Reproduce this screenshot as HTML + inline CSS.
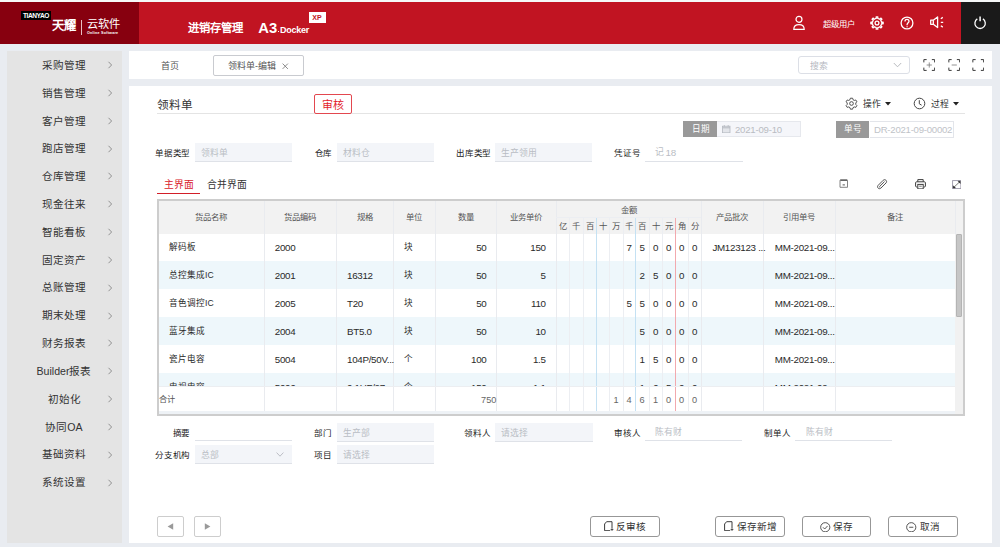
<!DOCTYPE html>
<html lang="zh-CN"><head><meta charset="utf-8"><title>领料单</title>
<style>
html,body{margin:0;padding:0;}
body{width:1000px;height:547px;overflow:hidden;position:relative;background:#e9ecf1;font-family:"Liberation Sans",sans-serif;}
.a{position:absolute;}
.t{position:absolute;white-space:nowrap;line-height:1;}
</style></head><body>
<div class="a" style="left:0.00px;top:0.00px;width:1000.00px;height:2.00px;background:#f6f8f8"></div>
<div class="a" style="left:0.00px;top:2.00px;width:139.00px;height:41.50px;background:#87000f"></div>
<div class="a" style="left:139.00px;top:2.00px;width:822.00px;height:41.50px;background:#c11422"></div>
<div class="a" style="left:961.00px;top:2.00px;width:39.00px;height:41.50px;background:#1a1a1a"></div>
<div class="a" style="left:21.00px;top:11.00px;width:30.00px;height:9.00px;background:#000"></div>
<div class="t" style="left:23.00px;top:11.70px;font-size:6.6px;color:#fff;font-weight:bold;letter-spacing:-0.45px;line-height:8px">TIANYAO</div>
<div class="t" style="left:52.00px;top:20.30px;font-size:12.3px;color:#fff;font-weight:bold;">天耀</div>
<div class="a" style="left:80.50px;top:20.00px;width:1.00px;height:15.00px;background:#e8c0c4"></div>
<div class="t" style="left:86.80px;top:19.40px;font-size:11.2px;color:#fff;">云软件</div>
<div class="t" style="left:87.00px;top:30.80px;font-size:3.7px;color:#fff;font-weight:bold;line-height:4px;letter-spacing:0.22px">Online Software</div>
<div class="t" style="left:187.50px;top:22.60px;font-size:11.3px;color:#fff;font-weight:bold;">进销存管理</div>
<div class="t" style="left:258.30px;top:21.00px;font-size:14.8px;color:#fff;font-weight:bold;line-height:15px">A3</div>
<div class="a" style="left:277.90px;top:30.80px;width:1.60px;height:1.60px;background:#fff"></div>
<div class="t" style="left:280.00px;top:26.00px;font-size:9px;color:#fff;font-weight:bold;line-height:9px;letter-spacing:-0.25px">Docker</div>
<div class="a" style="left:309.00px;top:12.40px;width:17.00px;height:10.60px;background:#fff"></div>
<div class="t" style="left:312.30px;top:14.20px;font-size:7px;color:#c11422;font-weight:bold;line-height:7px">XP</div>
<svg class="a" style="left:791px;top:14px" width="16" height="17" viewBox="0 0 16 17" fill="none" stroke="#fff" stroke-width="1.2">
<circle cx="8" cy="5.3" r="3"/><path d="M2.8 15.3 C2.8 12.2 5 10.6 8 10.6 C11 10.6 13.2 12.2 13.2 15.3 Z"/></svg>
<div class="t" style="left:823.30px;top:20.30px;font-size:8.3px;color:#fff;">超级用户</div>
<svg class="a" style="left:869px;top:14.5px" width="16" height="16" viewBox="0 0 16 16" fill="none" stroke="#fff" stroke-width="1.3" stroke-linejoin="round">
<path d="M12.26 6.27 L12.54 7.24 L14.15 7.18 L14.15 8.82 L12.54 8.76 L12.24 9.79 L11.74 10.67 L12.92 11.77 L11.77 12.92 L10.67 11.74 L9.73 12.26 L8.76 12.54 L8.82 14.15 L7.18 14.15 L7.24 12.54 L6.21 12.24 L5.33 11.74 L4.23 12.92 L3.08 11.77 L4.26 10.67 L3.74 9.73 L3.46 8.76 L1.85 8.82 L1.85 7.18 L3.46 7.24 L3.76 6.21 L4.26 5.33 L3.08 4.23 L4.23 3.08 L5.33 4.26 L6.27 3.74 L7.24 3.46 L7.18 1.85 L8.82 1.85 L8.76 3.46 L9.79 3.76 L10.67 4.26 L11.77 3.08 L12.92 4.23 L11.74 5.33 Z"/><circle cx="8" cy="8" r="1.9"/></svg>
<svg class="a" style="left:899px;top:14.5px" width="16" height="16" viewBox="0 0 16 16" fill="none" stroke="#fff" stroke-width="1.3">
<circle cx="8" cy="8" r="5.9"/><path d="M6 6.4 C6 5 6.9 4.3 8 4.3 C9.1 4.3 10 5 10 6.2 C10 7.6 8.1 7.8 8.1 9.6 V10.2"/><path d="M8.1 11.2 V12.3" stroke-width="1.2"/></svg>
<svg class="a" style="left:929px;top:15px" width="16" height="15" viewBox="0 0 16 15" fill="none" stroke="#fff" stroke-width="1.3" stroke-linejoin="round">
<path d="M1.7 5.2 H4.3 L8.6 1.9 V12.6 L4.3 9.3 H1.7 Z"/><path d="M4.3 5.2 V9.3"/><path d="M11.8 3.7 L13.8 2.4 M11.8 7.3 H14.2 M11.8 10.8 L13.8 12.1"/></svg>
<svg class="a" style="left:972px;top:15px" width="16" height="16" viewBox="0 0 16 16" fill="none" stroke="#fff" stroke-width="1.3">
<path d="M5.3 3.9 A5.2 5.2 0 1 0 10.9 3.9"/><path d="M8.1 1.4 V6.3" stroke-width="1.5"/></svg>
<div class="a" style="left:7.00px;top:51.00px;width:114.50px;height:492.00px;background:#e4e4e4"></div>
<div class="t" style="left:7px;width:114px;text-align:center;top:59.90px;font-size:10.6px;color:#333">采购管理</div>
<svg class="a" style="left:107px;top:61.20px" width="6" height="8" viewBox="0 0 6 8" fill="none" stroke="#888" stroke-width="0.9"><path d="M1.5 0.8 L4.6 4 L1.5 7.2"/></svg>
<div class="t" style="left:7px;width:114px;text-align:center;top:87.72px;font-size:10.6px;color:#333">销售管理</div>
<svg class="a" style="left:107px;top:89.02px" width="6" height="8" viewBox="0 0 6 8" fill="none" stroke="#888" stroke-width="0.9"><path d="M1.5 0.8 L4.6 4 L1.5 7.2"/></svg>
<div class="t" style="left:7px;width:114px;text-align:center;top:115.54px;font-size:10.6px;color:#333">客户管理</div>
<svg class="a" style="left:107px;top:116.84px" width="6" height="8" viewBox="0 0 6 8" fill="none" stroke="#888" stroke-width="0.9"><path d="M1.5 0.8 L4.6 4 L1.5 7.2"/></svg>
<div class="t" style="left:7px;width:114px;text-align:center;top:143.36px;font-size:10.6px;color:#333">跑店管理</div>
<svg class="a" style="left:107px;top:144.66px" width="6" height="8" viewBox="0 0 6 8" fill="none" stroke="#888" stroke-width="0.9"><path d="M1.5 0.8 L4.6 4 L1.5 7.2"/></svg>
<div class="t" style="left:7px;width:114px;text-align:center;top:171.18px;font-size:10.6px;color:#333">仓库管理</div>
<svg class="a" style="left:107px;top:172.48px" width="6" height="8" viewBox="0 0 6 8" fill="none" stroke="#888" stroke-width="0.9"><path d="M1.5 0.8 L4.6 4 L1.5 7.2"/></svg>
<div class="t" style="left:7px;width:114px;text-align:center;top:199.00px;font-size:10.6px;color:#333">现金往来</div>
<svg class="a" style="left:107px;top:200.30px" width="6" height="8" viewBox="0 0 6 8" fill="none" stroke="#888" stroke-width="0.9"><path d="M1.5 0.8 L4.6 4 L1.5 7.2"/></svg>
<div class="t" style="left:7px;width:114px;text-align:center;top:226.82px;font-size:10.6px;color:#333">智能看板</div>
<svg class="a" style="left:107px;top:228.12px" width="6" height="8" viewBox="0 0 6 8" fill="none" stroke="#888" stroke-width="0.9"><path d="M1.5 0.8 L4.6 4 L1.5 7.2"/></svg>
<div class="t" style="left:7px;width:114px;text-align:center;top:254.64px;font-size:10.6px;color:#333">固定资产</div>
<svg class="a" style="left:107px;top:255.94px" width="6" height="8" viewBox="0 0 6 8" fill="none" stroke="#888" stroke-width="0.9"><path d="M1.5 0.8 L4.6 4 L1.5 7.2"/></svg>
<div class="t" style="left:7px;width:114px;text-align:center;top:282.46px;font-size:10.6px;color:#333">总账管理</div>
<svg class="a" style="left:107px;top:283.76px" width="6" height="8" viewBox="0 0 6 8" fill="none" stroke="#888" stroke-width="0.9"><path d="M1.5 0.8 L4.6 4 L1.5 7.2"/></svg>
<div class="t" style="left:7px;width:114px;text-align:center;top:310.28px;font-size:10.6px;color:#333">期末处理</div>
<svg class="a" style="left:107px;top:311.58px" width="6" height="8" viewBox="0 0 6 8" fill="none" stroke="#888" stroke-width="0.9"><path d="M1.5 0.8 L4.6 4 L1.5 7.2"/></svg>
<div class="t" style="left:7px;width:114px;text-align:center;top:338.10px;font-size:10.6px;color:#333">财务报表</div>
<svg class="a" style="left:107px;top:339.40px" width="6" height="8" viewBox="0 0 6 8" fill="none" stroke="#888" stroke-width="0.9"><path d="M1.5 0.8 L4.6 4 L1.5 7.2"/></svg>
<div class="t" style="left:7px;width:114px;text-align:center;top:365.92px;font-size:10.6px;color:#333">Builder报表</div>
<svg class="a" style="left:107px;top:367.22px" width="6" height="8" viewBox="0 0 6 8" fill="none" stroke="#888" stroke-width="0.9"><path d="M1.5 0.8 L4.6 4 L1.5 7.2"/></svg>
<div class="t" style="left:7px;width:114px;text-align:center;top:393.74px;font-size:10.6px;color:#333">初始化</div>
<svg class="a" style="left:107px;top:395.04px" width="6" height="8" viewBox="0 0 6 8" fill="none" stroke="#888" stroke-width="0.9"><path d="M1.5 0.8 L4.6 4 L1.5 7.2"/></svg>
<div class="t" style="left:7px;width:114px;text-align:center;top:421.56px;font-size:10.6px;color:#333">协同OA</div>
<svg class="a" style="left:107px;top:422.86px" width="6" height="8" viewBox="0 0 6 8" fill="none" stroke="#888" stroke-width="0.9"><path d="M1.5 0.8 L4.6 4 L1.5 7.2"/></svg>
<div class="t" style="left:7px;width:114px;text-align:center;top:449.38px;font-size:10.6px;color:#333">基础资料</div>
<svg class="a" style="left:107px;top:450.68px" width="6" height="8" viewBox="0 0 6 8" fill="none" stroke="#888" stroke-width="0.9"><path d="M1.5 0.8 L4.6 4 L1.5 7.2"/></svg>
<div class="t" style="left:7px;width:114px;text-align:center;top:477.20px;font-size:10.6px;color:#333">系统设置</div>
<svg class="a" style="left:107px;top:478.50px" width="6" height="8" viewBox="0 0 6 8" fill="none" stroke="#888" stroke-width="0.9"><path d="M1.5 0.8 L4.6 4 L1.5 7.2"/></svg>
<div class="a" style="left:129.00px;top:51.00px;width:863.00px;height:28.00px;background:#fff"></div>
<div class="t" style="left:161.00px;top:62.00px;font-size:9px;color:#555;">首页</div>
<div class="a" style="left:213.40px;top:55.40px;width:90.20px;height:20.20px;border:1px solid #c9cbd0;border-radius:2px;box-sizing:border-box;background:#fff"></div>
<div class="t" style="left:228.00px;top:62.00px;font-size:9px;color:#555;">领料单-编辑</div>
<svg class="a" style="left:282.3px;top:63.2px" width="6.5" height="6.5" viewBox="0 0 6.5 6.5" stroke="#777" stroke-width="0.85"><path d="M0.6 0.6 L5.9 5.9 M5.9 0.6 L0.6 5.9"/></svg>
<div class="a" style="left:798.40px;top:55.50px;width:111.30px;height:18.90px;border:1px solid #dcdfe6;border-radius:3px;box-sizing:border-box;background:#fff"></div>
<div class="t" style="left:810.00px;top:61.50px;font-size:8.8px;color:#b5b8bf;">搜索</div>
<svg class="a" style="left:893px;top:62px" width="9" height="6" viewBox="0 0 9 6" fill="none" stroke="#b0b3b8" stroke-width="0.9"><path d="M0.8 1 L4.5 4.8 L8.2 1"/></svg>
<svg class="a" style="left:922.8px;top:58.6px" width="12.5" height="12" viewBox="0 0 12 12" fill="none" stroke="#3a3a3a" stroke-width="1"><path d="M0.6 3.4 V0.6 H3.4 M8.6 0.6 H11.4 V3.4 M11.4 8.6 V11.4 H8.6 M3.4 11.4 H0.6 V8.6"/><path d="M6 3.4 V8.6 M3.4 6 H8.6" stroke="#777" stroke-width="0.8"/></svg>
<svg class="a" style="left:947.5px;top:58.6px" width="12.5" height="12" viewBox="0 0 12 12" fill="none" stroke="#3a3a3a" stroke-width="1"><path d="M0.6 3.4 V0.6 H3.4 M8.6 0.6 H11.4 V3.4 M11.4 8.6 V11.4 H8.6 M3.4 11.4 H0.6 V8.6"/><path d="M3.4 6 H8.6" stroke="#777" stroke-width="0.8"/></svg>
<svg class="a" style="left:971.7px;top:58.6px" width="12.5" height="12" viewBox="0 0 12 12" fill="none" stroke="#3a3a3a" stroke-width="1"><path d="M0.6 3.4 V0.6 H3.4 M8.6 0.6 H11.4 V3.4 M11.4 8.6 V11.4 H8.6 M3.4 11.4 H0.6 V8.6"/></svg>
<div class="a" style="left:129.00px;top:86.00px;width:863.00px;height:457.40px;background:#fff"></div>
<div class="t" style="left:157.00px;top:98.50px;font-size:11.6px;color:#333;">领料单</div>
<div class="a" style="left:157.00px;top:113.00px;width:808.00px;height:1.00px;background:#e4e4e4"></div>
<div class="a" style="left:313.80px;top:94.20px;width:37.90px;height:19.60px;border:1px solid #e3474f;border-radius:2px;box-sizing:border-box;background:#fff"></div>
<div class="t" style="left:321.50px;top:99.50px;font-size:11px;color:#e3242e;">审核</div>
<svg class="a" style="left:844.5px;top:97px" width="13" height="13" viewBox="0 0 14 14" fill="none" stroke="#444" stroke-width="1">
<path d="M5.8 1.3 h2.4 l0.4 1.6 l1.4 0.8 l1.6 -0.5 l1.2 2 l-1.2 1.2 v1.6 l1.2 1.2 l-1.2 2 l-1.6 -0.5 l-1.4 0.8 l-0.4 1.6 h-2.4 l-0.4 -1.6 l-1.4 -0.8 l-1.6 0.5 l-1.2 -2 l1.2 -1.2 v-1.6 l-1.2 -1.2 l1.2 -2 l1.6 0.5 l1.4 -0.8 z"/><circle cx="7" cy="7" r="2"/></svg>
<div class="t" style="left:862.70px;top:100.00px;font-size:8.8px;color:#333;">操作</div>
<svg class="a" style="left:885px;top:102px" width="6" height="3.5" viewBox="0 0 6 3.5"><path d="M0 0 H6 L3 3.5 Z" fill="#222"/></svg>
<svg class="a" style="left:913px;top:96.8px" width="13" height="13" viewBox="0 0 13 13" fill="none" stroke="#444" stroke-width="1"><circle cx="6.5" cy="6.5" r="5.3"/><path d="M6.3 3.2 V6.8 L8.6 8.2"/></svg>
<div class="t" style="left:930.90px;top:100.00px;font-size:8.8px;color:#333;">过程</div>
<svg class="a" style="left:953.2px;top:102px" width="6" height="3.5" viewBox="0 0 6 3.5"><path d="M0 0 H6 L3 3.5 Z" fill="#222"/></svg>
<div class="a" style="left:683.20px;top:121.20px;width:33.80px;height:16.20px;background:#999"></div>
<div class="t" style="left:692.00px;top:125.00px;font-size:8.6px;color:#fff;font-weight:500">日期</div>
<div class="a" style="left:717.00px;top:121.20px;width:84.00px;height:16.20px;background:#f5f6fa;border:1px solid #e6e8ed;border-left:none;box-sizing:border-box"></div>
<svg class="a" style="left:722px;top:125px" width="8.5" height="8" viewBox="0 0 8.5 8"><rect x="0.5" y="1.2" width="7.5" height="6.6" fill="#e3e5ea" stroke="#b5b9c0" stroke-width="0.8"/><path d="M0.5 2.8 H8" stroke="#b5b9c0" stroke-width="1"/><path d="M2.3 0 V1.8 M6.2 0 V1.8" stroke="#b5b9c0" stroke-width="0.8"/></svg>
<div class="t" style="left:735.00px;top:125.20px;font-size:9.6px;color:#b9bcc2;letter-spacing:-0.22px">2021-09-10</div>
<div class="a" style="left:836.20px;top:121.00px;width:33.30px;height:16.60px;background:#999"></div>
<div class="t" style="left:844.00px;top:125.00px;font-size:8.6px;color:#fff;font-weight:500">单号</div>
<div class="a" style="left:869.50px;top:121.00px;width:84.50px;height:16.60px;background:#fff;border:1px solid #e3e5ea;border-left:none;box-sizing:border-box"></div>
<div class="t" style="left:874.00px;top:125.20px;font-size:9.6px;color:#c0c3c8;letter-spacing:-0.25px">DR-2021-09-00002</div>
<div class="t" style="left:155.40px;top:148.60px;font-size:8.5px;color:#1a1a1a;font-weight:500;letter-spacing:-0.3px">单据类型</div>
<div class="a" style="left:195.00px;top:142.60px;width:97.30px;height:19.00px;background:#f3f5f9;border-bottom:1px solid #dfe2e8;box-sizing:border-box"></div>
<div class="t" style="left:201.00px;top:148.50px;font-size:8.8px;color:#b9bdc4;">领料单</div>
<div class="t" style="left:314.50px;top:148.60px;font-size:8.5px;color:#1a1a1a;font-weight:500;letter-spacing:-0.3px">仓库</div>
<div class="a" style="left:337.00px;top:142.60px;width:96.80px;height:19.00px;background:#f3f5f9;border-bottom:1px solid #dfe2e8;box-sizing:border-box"></div>
<div class="t" style="left:343.00px;top:148.50px;font-size:8.8px;color:#b9bdc4;">材料仓</div>
<div class="t" style="left:456.20px;top:148.60px;font-size:8.5px;color:#1a1a1a;font-weight:500;letter-spacing:-0.3px">出库类型</div>
<div class="a" style="left:495.00px;top:142.60px;width:97.20px;height:19.00px;background:#f3f5f9;border-bottom:1px solid #dfe2e8;box-sizing:border-box"></div>
<div class="t" style="left:501.00px;top:148.50px;font-size:8.8px;color:#b9bdc4;">生产领用</div>
<div class="t" style="left:614.20px;top:148.70px;font-size:8.5px;color:#1a1a1a;font-weight:500;letter-spacing:-0.3px">凭证号</div>
<div class="a" style="left:645.00px;top:142.60px;width:97.60px;height:19.20px;border-bottom:1px solid #dfe2e8;box-sizing:border-box"></div>
<div class="t" style="left:655.30px;top:148.20px;font-size:8.8px;color:#b9bdc4;">记</div>
<div class="t" style="left:665.50px;top:148.00px;font-size:9.8px;color:#b9bdc4;letter-spacing:-0.2px">18</div>
<div class="t" style="left:163.90px;top:179.60px;font-size:9.8px;color:#d9222c;">主界面</div>
<div class="a" style="left:157.00px;top:192.50px;width:42.90px;height:1.70px;background:#d21e28"></div>
<div class="t" style="left:207.40px;top:179.60px;font-size:9.8px;color:#333;">合并界面</div>
<svg class="a" style="left:838.5px;top:179.2px" width="9.5" height="9.5" viewBox="0 0 9.5 9.5" fill="none"><path d="M1.2 1.1 H8.3" stroke="#333" stroke-width="1.3"/><path d="M1 1.2 V8.3 H8.5 V1.2" stroke="#777" stroke-width="0.9"/><path d="M3.6 5.9 H5.9" stroke="#555" stroke-width="1"/></svg>
<svg class="a" style="left:876.6px;top:178.5px" width="11" height="11" viewBox="0 0 11 11" fill="none" stroke="#4a4a4a" stroke-width="0.95"><path d="M8.9 1.2 C9.8 2 9.8 3.2 9 4 L4 9 C3.1 9.9 1.9 9.9 1.1 9.1 C0.3 8.3 0.4 7.1 1.2 6.3 L6.2 1.3 C7 0.5 8.1 0.4 8.9 1.2 Z"/><path d="M7.5 2.6 L2.7 7.4 C2.4 7.7 2.4 8.1 2.7 8.4"/></svg>
<svg class="a" style="left:915.4px;top:178.6px" width="11" height="10.5" viewBox="0 0 11 10.5" fill="none" stroke="#3d3d3d" stroke-width="1"><path d="M2.8 2.8 V0.6 H8.2 V2.8"/><path d="M2.4 8 H1.6 C1 8 0.6 7.6 0.6 7 V3.8 C0.6 3.2 1 2.8 1.6 2.8 H9.4 C10 2.8 10.4 3.2 10.4 3.8 V7 C10.4 7.6 10 8 9.4 8 H8.6"/><rect x="2.8" y="5.4" width="5.4" height="4.5"/><path d="M4.2 7.2 H6.8" stroke-width="0.7"/></svg>
<svg class="a" style="left:951.6px;top:179.8px" width="9.5" height="9.2" viewBox="0 0 9.5 9.2" fill="none"><rect x="0.6" y="0.6" width="8.3" height="8" stroke="#9a96a8" stroke-width="0.9"/><path d="M1.6 7.6 L7.9 1.6" stroke="#555" stroke-width="0.8"/><path d="M6 1.2 H8.3 V3.5 Z M1.2 5.7 V8 H3.5 Z" fill="#222" stroke="#222" stroke-width="0.4"/></svg>
<div class="a" style="left:157.00px;top:199.00px;width:808.00px;height:217.00px;border:2px solid #cdcdcd;box-sizing:border-box;background:#fff"></div>
<div class="a" style="left:159.00px;top:201.00px;width:804.00px;height:32.60px;background:#f2f2f2"></div>
<div class="a" style="left:158.5px;top:233.6px;width:796.50px;height:152.15px;overflow:hidden">
<div class="a" style="left:0;top:0.00px;width:100%;height:27.9px;background:#fff"></div>
<div class="a" style="left:0;top:27.90px;width:100%;height:27.9px;background:#eef7fb"></div>
<div class="a" style="left:0;top:55.80px;width:100%;height:27.9px;background:#fff"></div>
<div class="a" style="left:0;top:83.70px;width:100%;height:27.9px;background:#eef7fb"></div>
<div class="a" style="left:0;top:111.60px;width:100%;height:27.9px;background:#fff"></div>
<div class="a" style="left:0;top:139.50px;width:100%;height:27.9px;background:#eef7fb"></div>
</div>
<div class="a" style="left:264.00px;top:201.00px;width:1.00px;height:212.75px;background:#e9ebef"></div>
<div class="a" style="left:336.00px;top:201.00px;width:1.00px;height:212.75px;background:#e9ebef"></div>
<div class="a" style="left:393.00px;top:201.00px;width:1.00px;height:212.75px;background:#e9ebef"></div>
<div class="a" style="left:435.00px;top:201.00px;width:1.00px;height:212.75px;background:#e9ebef"></div>
<div class="a" style="left:496.00px;top:201.00px;width:1.00px;height:212.75px;background:#e9ebef"></div>
<div class="a" style="left:556.00px;top:201.00px;width:1.00px;height:212.75px;background:#e9ebef"></div>
<div class="a" style="left:701.00px;top:201.00px;width:1.00px;height:212.75px;background:#e9ebef"></div>
<div class="a" style="left:763.00px;top:201.00px;width:1.00px;height:212.75px;background:#e9ebef"></div>
<div class="a" style="left:835.00px;top:201.00px;width:1.00px;height:212.75px;background:#e9ebef"></div>
<div class="a" style="left:955.00px;top:201.00px;width:1.00px;height:212.75px;background:#e9ebef"></div>
<div class="a" style="left:569.00px;top:216.90px;width:1.00px;height:196.85px;background:#eceef2"></div>
<div class="a" style="left:583.00px;top:216.90px;width:1.00px;height:196.85px;background:#eceef2"></div>
<div class="a" style="left:596.00px;top:216.90px;width:1.00px;height:196.85px;background:#c4e1f3"></div>
<div class="a" style="left:609.00px;top:216.90px;width:1.00px;height:196.85px;background:#eceef2"></div>
<div class="a" style="left:623.00px;top:216.90px;width:1.00px;height:196.85px;background:#eceef2"></div>
<div class="a" style="left:635.00px;top:216.90px;width:1.00px;height:196.85px;background:#c4e1f3"></div>
<div class="a" style="left:649.00px;top:216.90px;width:1.00px;height:196.85px;background:#eceef2"></div>
<div class="a" style="left:662.00px;top:216.90px;width:1.00px;height:196.85px;background:#eceef2"></div>
<div class="a" style="left:675.00px;top:216.90px;width:1.00px;height:196.85px;background:#f2a9ae"></div>
<div class="a" style="left:688.00px;top:216.90px;width:1.00px;height:196.85px;background:#eceef2"></div>
<div class="a" style="left:556.00px;top:217.00px;width:145.00px;height:1.00px;background:#eceef2"></div>
<div class="t" style="left:157.50px;width:106.50px;text-align:center;top:213.00px;font-size:8.4px;color:#555;">货品名称</div>
<div class="t" style="left:264.00px;width:72.00px;text-align:center;top:213.00px;font-size:8.4px;color:#555;">货品编码</div>
<div class="t" style="left:336.00px;width:57.00px;text-align:center;top:213.00px;font-size:8.4px;color:#555;">规格</div>
<div class="t" style="left:393.00px;width:42.00px;text-align:center;top:213.00px;font-size:8.4px;color:#555;">单位</div>
<div class="t" style="left:435.00px;width:61.00px;text-align:center;top:213.00px;font-size:8.4px;color:#555;">数量</div>
<div class="t" style="left:496.00px;width:60.00px;text-align:center;top:213.00px;font-size:8.4px;color:#555;">业务单价</div>
<div class="t" style="left:556.00px;width:145.00px;text-align:center;top:205.80px;font-size:8.4px;color:#555;">金额</div>
<div class="t" style="left:556.00px;width:13.00px;text-align:center;top:221.80px;font-size:8.4px;color:#555;">亿</div>
<div class="t" style="left:569.00px;width:14.00px;text-align:center;top:221.80px;font-size:8.4px;color:#555;">千</div>
<div class="t" style="left:583.00px;width:13.00px;text-align:center;top:221.80px;font-size:8.4px;color:#555;">百</div>
<div class="t" style="left:596.00px;width:13.00px;text-align:center;top:221.80px;font-size:8.4px;color:#555;">十</div>
<div class="t" style="left:609.00px;width:14.00px;text-align:center;top:221.80px;font-size:8.4px;color:#555;">万</div>
<div class="t" style="left:623.00px;width:12.00px;text-align:center;top:221.80px;font-size:8.4px;color:#555;">千</div>
<div class="t" style="left:635.00px;width:14.00px;text-align:center;top:221.80px;font-size:8.4px;color:#555;">百</div>
<div class="t" style="left:649.00px;width:13.00px;text-align:center;top:221.80px;font-size:8.4px;color:#555;">十</div>
<div class="t" style="left:662.00px;width:13.00px;text-align:center;top:221.80px;font-size:8.4px;color:#555;">元</div>
<div class="t" style="left:675.00px;width:13.00px;text-align:center;top:221.80px;font-size:8.4px;color:#555;">角</div>
<div class="t" style="left:688.00px;width:13.00px;text-align:center;top:221.80px;font-size:8.4px;color:#555;">分</div>
<div class="t" style="left:701.00px;width:62.00px;text-align:center;top:213.00px;font-size:8.4px;color:#555;">产品批次</div>
<div class="t" style="left:763.00px;width:72.00px;text-align:center;top:213.00px;font-size:8.4px;color:#555;">引用单号</div>
<div class="t" style="left:835.00px;width:120.00px;text-align:center;top:213.00px;font-size:8.4px;color:#555;">备注</div>
<div class="a" style="left:0;top:233.6px;width:1000px;height:152.15px;overflow:hidden">
<div class="t" style="left:169.00px;top:9.90px;font-size:8.6px;color:#2a2a2a;">解码板</div>
<div class="t" style="left:274.80px;top:9.60px;font-size:9.8px;color:#2a2a2a;letter-spacing:-0.3px">2000</div>
<div class="t" style="left:347.00px;top:9.60px;font-size:9.8px;color:#2a2a2a;letter-spacing:-0.3px"></div>
<div class="t" style="left:404.40px;top:9.90px;font-size:8.6px;color:#2a2a2a;">块</div>
<div class="t" style="left:396px;width:90.5px;text-align:right;top:9.60px;font-size:9.8px;color:#2a2a2a;letter-spacing:-0.3px">50</div>
<div class="t" style="left:456px;width:89.7px;text-align:right;top:9.60px;font-size:9.8px;color:#2a2a2a;letter-spacing:-0.3px">150</div>
<div class="t" style="left:688.15px;width:13.00px;text-align:center;top:9.60px;font-size:9.8px;color:#2a2a2a;">0</div>
<div class="t" style="left:675.15px;width:13.00px;text-align:center;top:9.60px;font-size:9.8px;color:#2a2a2a;">0</div>
<div class="t" style="left:662.15px;width:13.00px;text-align:center;top:9.60px;font-size:9.8px;color:#2a2a2a;">0</div>
<div class="t" style="left:649.15px;width:13.00px;text-align:center;top:9.60px;font-size:9.8px;color:#2a2a2a;">0</div>
<div class="t" style="left:635.15px;width:14.00px;text-align:center;top:9.60px;font-size:9.8px;color:#2a2a2a;">5</div>
<div class="t" style="left:623.15px;width:12.00px;text-align:center;top:9.60px;font-size:9.8px;color:#2a2a2a;">7</div>
<div class="t" style="left:712.40px;top:9.60px;font-size:9.8px;color:#2a2a2a;letter-spacing:-0.3px">JM123123 ...</div>
<div class="t" style="left:774.80px;top:9.60px;font-size:9.8px;color:#2a2a2a;letter-spacing:-0.3px">MM-2021-09...</div>
<div class="t" style="left:169.00px;top:37.80px;font-size:8.6px;color:#2a2a2a;">总控集成IC</div>
<div class="t" style="left:274.80px;top:37.50px;font-size:9.8px;color:#2a2a2a;letter-spacing:-0.3px">2001</div>
<div class="t" style="left:347.00px;top:37.50px;font-size:9.8px;color:#2a2a2a;letter-spacing:-0.3px">16312</div>
<div class="t" style="left:404.40px;top:37.80px;font-size:8.6px;color:#2a2a2a;">块</div>
<div class="t" style="left:396px;width:90.5px;text-align:right;top:37.50px;font-size:9.8px;color:#2a2a2a;letter-spacing:-0.3px">50</div>
<div class="t" style="left:456px;width:89.7px;text-align:right;top:37.50px;font-size:9.8px;color:#2a2a2a;letter-spacing:-0.3px">5</div>
<div class="t" style="left:688.15px;width:13.00px;text-align:center;top:37.50px;font-size:9.8px;color:#2a2a2a;">0</div>
<div class="t" style="left:675.15px;width:13.00px;text-align:center;top:37.50px;font-size:9.8px;color:#2a2a2a;">0</div>
<div class="t" style="left:662.15px;width:13.00px;text-align:center;top:37.50px;font-size:9.8px;color:#2a2a2a;">0</div>
<div class="t" style="left:649.15px;width:13.00px;text-align:center;top:37.50px;font-size:9.8px;color:#2a2a2a;">5</div>
<div class="t" style="left:635.15px;width:14.00px;text-align:center;top:37.50px;font-size:9.8px;color:#2a2a2a;">2</div>
<div class="t" style="left:712.40px;top:37.50px;font-size:9.8px;color:#2a2a2a;letter-spacing:-0.3px"></div>
<div class="t" style="left:774.80px;top:37.50px;font-size:9.8px;color:#2a2a2a;letter-spacing:-0.3px">MM-2021-09...</div>
<div class="t" style="left:169.00px;top:65.70px;font-size:8.6px;color:#2a2a2a;">音色调控IC</div>
<div class="t" style="left:274.80px;top:65.40px;font-size:9.8px;color:#2a2a2a;letter-spacing:-0.3px">2005</div>
<div class="t" style="left:347.00px;top:65.40px;font-size:9.8px;color:#2a2a2a;letter-spacing:-0.3px">T20</div>
<div class="t" style="left:404.40px;top:65.70px;font-size:8.6px;color:#2a2a2a;">块</div>
<div class="t" style="left:396px;width:90.5px;text-align:right;top:65.40px;font-size:9.8px;color:#2a2a2a;letter-spacing:-0.3px">50</div>
<div class="t" style="left:456px;width:89.7px;text-align:right;top:65.40px;font-size:9.8px;color:#2a2a2a;letter-spacing:-0.3px">110</div>
<div class="t" style="left:688.15px;width:13.00px;text-align:center;top:65.40px;font-size:9.8px;color:#2a2a2a;">0</div>
<div class="t" style="left:675.15px;width:13.00px;text-align:center;top:65.40px;font-size:9.8px;color:#2a2a2a;">0</div>
<div class="t" style="left:662.15px;width:13.00px;text-align:center;top:65.40px;font-size:9.8px;color:#2a2a2a;">0</div>
<div class="t" style="left:649.15px;width:13.00px;text-align:center;top:65.40px;font-size:9.8px;color:#2a2a2a;">0</div>
<div class="t" style="left:635.15px;width:14.00px;text-align:center;top:65.40px;font-size:9.8px;color:#2a2a2a;">5</div>
<div class="t" style="left:623.15px;width:12.00px;text-align:center;top:65.40px;font-size:9.8px;color:#2a2a2a;">5</div>
<div class="t" style="left:712.40px;top:65.40px;font-size:9.8px;color:#2a2a2a;letter-spacing:-0.3px"></div>
<div class="t" style="left:774.80px;top:65.40px;font-size:9.8px;color:#2a2a2a;letter-spacing:-0.3px">MM-2021-09...</div>
<div class="t" style="left:169.00px;top:93.60px;font-size:8.6px;color:#2a2a2a;">蓝牙集成</div>
<div class="t" style="left:274.80px;top:93.30px;font-size:9.8px;color:#2a2a2a;letter-spacing:-0.3px">2004</div>
<div class="t" style="left:347.00px;top:93.30px;font-size:9.8px;color:#2a2a2a;letter-spacing:-0.3px">BT5.0</div>
<div class="t" style="left:404.40px;top:93.60px;font-size:8.6px;color:#2a2a2a;">块</div>
<div class="t" style="left:396px;width:90.5px;text-align:right;top:93.30px;font-size:9.8px;color:#2a2a2a;letter-spacing:-0.3px">50</div>
<div class="t" style="left:456px;width:89.7px;text-align:right;top:93.30px;font-size:9.8px;color:#2a2a2a;letter-spacing:-0.3px">10</div>
<div class="t" style="left:688.15px;width:13.00px;text-align:center;top:93.30px;font-size:9.8px;color:#2a2a2a;">0</div>
<div class="t" style="left:675.15px;width:13.00px;text-align:center;top:93.30px;font-size:9.8px;color:#2a2a2a;">0</div>
<div class="t" style="left:662.15px;width:13.00px;text-align:center;top:93.30px;font-size:9.8px;color:#2a2a2a;">0</div>
<div class="t" style="left:649.15px;width:13.00px;text-align:center;top:93.30px;font-size:9.8px;color:#2a2a2a;">0</div>
<div class="t" style="left:635.15px;width:14.00px;text-align:center;top:93.30px;font-size:9.8px;color:#2a2a2a;">5</div>
<div class="t" style="left:712.40px;top:93.30px;font-size:9.8px;color:#2a2a2a;letter-spacing:-0.3px"></div>
<div class="t" style="left:774.80px;top:93.30px;font-size:9.8px;color:#2a2a2a;letter-spacing:-0.3px">MM-2021-09...</div>
<div class="t" style="left:169.00px;top:121.50px;font-size:8.6px;color:#2a2a2a;">瓷片电容</div>
<div class="t" style="left:274.80px;top:121.20px;font-size:9.8px;color:#2a2a2a;letter-spacing:-0.3px">5004</div>
<div class="t" style="left:347.00px;top:121.20px;font-size:9.8px;color:#2a2a2a;letter-spacing:-0.3px">104P/50V...</div>
<div class="t" style="left:404.40px;top:121.50px;font-size:8.6px;color:#2a2a2a;">个</div>
<div class="t" style="left:396px;width:90.5px;text-align:right;top:121.20px;font-size:9.8px;color:#2a2a2a;letter-spacing:-0.3px">100</div>
<div class="t" style="left:456px;width:89.7px;text-align:right;top:121.20px;font-size:9.8px;color:#2a2a2a;letter-spacing:-0.3px">1.5</div>
<div class="t" style="left:688.15px;width:13.00px;text-align:center;top:121.20px;font-size:9.8px;color:#2a2a2a;">0</div>
<div class="t" style="left:675.15px;width:13.00px;text-align:center;top:121.20px;font-size:9.8px;color:#2a2a2a;">0</div>
<div class="t" style="left:662.15px;width:13.00px;text-align:center;top:121.20px;font-size:9.8px;color:#2a2a2a;">0</div>
<div class="t" style="left:649.15px;width:13.00px;text-align:center;top:121.20px;font-size:9.8px;color:#2a2a2a;">5</div>
<div class="t" style="left:635.15px;width:14.00px;text-align:center;top:121.20px;font-size:9.8px;color:#2a2a2a;">1</div>
<div class="t" style="left:712.40px;top:121.20px;font-size:9.8px;color:#2a2a2a;letter-spacing:-0.3px"></div>
<div class="t" style="left:774.80px;top:121.20px;font-size:9.8px;color:#2a2a2a;letter-spacing:-0.3px">MM-2021-09...</div>
<div class="t" style="left:169.00px;top:149.40px;font-size:8.6px;color:#2a2a2a;">电视电容</div>
<div class="t" style="left:274.80px;top:149.10px;font-size:9.8px;color:#2a2a2a;letter-spacing:-0.3px">5006</div>
<div class="t" style="left:347.00px;top:149.10px;font-size:9.8px;color:#2a2a2a;letter-spacing:-0.3px">0.1UF/27...</div>
<div class="t" style="left:404.40px;top:149.40px;font-size:8.6px;color:#2a2a2a;">个</div>
<div class="t" style="left:396px;width:90.5px;text-align:right;top:149.10px;font-size:9.8px;color:#2a2a2a;letter-spacing:-0.3px">150</div>
<div class="t" style="left:456px;width:89.7px;text-align:right;top:149.10px;font-size:9.8px;color:#2a2a2a;letter-spacing:-0.3px">1.1</div>
<div class="t" style="left:688.15px;width:13.00px;text-align:center;top:149.10px;font-size:9.8px;color:#2a2a2a;">0</div>
<div class="t" style="left:675.15px;width:13.00px;text-align:center;top:149.10px;font-size:9.8px;color:#2a2a2a;">0</div>
<div class="t" style="left:662.15px;width:13.00px;text-align:center;top:149.10px;font-size:9.8px;color:#2a2a2a;">5</div>
<div class="t" style="left:649.15px;width:13.00px;text-align:center;top:149.10px;font-size:9.8px;color:#2a2a2a;">6</div>
<div class="t" style="left:635.15px;width:14.00px;text-align:center;top:149.10px;font-size:9.8px;color:#2a2a2a;">1</div>
<div class="t" style="left:712.40px;top:149.10px;font-size:9.8px;color:#2a2a2a;letter-spacing:-0.3px"></div>
<div class="t" style="left:774.80px;top:149.10px;font-size:9.8px;color:#2a2a2a;letter-spacing:-0.3px">MM-2021-09...</div>
</div>
<div class="a" style="left:955.00px;top:233.60px;width:8.00px;height:180.15px;background:#f1f1f1"></div>
<div class="a" style="left:955.80px;top:234.00px;width:6.00px;height:83.00px;background:#c6c6c6;border:1px solid #b4b4b4;box-sizing:border-box;border-radius:1px"></div>
<div class="a" style="left:158.50px;top:385.75px;width:796.50px;height:0.60px;background:#eceef1"></div>
<div class="a" style="left:158.50px;top:411.30px;width:796.50px;height:2.30px;background:#eef2f6"></div>
<div class="t" style="left:159.00px;top:395.55px;font-size:8.2px;color:#555;">合计</div>
<div class="t" style="left:400px;width:96.4px;text-align:right;top:395.95px;font-size:9.2px;color:#666">750</div>
<div class="t" style="left:688.00px;width:13.00px;text-align:center;top:395.95px;font-size:9.2px;color:#666;">0</div>
<div class="t" style="left:675.00px;width:13.00px;text-align:center;top:395.95px;font-size:9.2px;color:#666;">0</div>
<div class="t" style="left:662.00px;width:13.00px;text-align:center;top:395.95px;font-size:9.2px;color:#666;">0</div>
<div class="t" style="left:649.00px;width:13.00px;text-align:center;top:395.95px;font-size:9.2px;color:#666;">1</div>
<div class="t" style="left:635.00px;width:14.00px;text-align:center;top:395.95px;font-size:9.2px;color:#666;">6</div>
<div class="t" style="left:623.00px;width:12.00px;text-align:center;top:395.95px;font-size:9.2px;color:#666;">4</div>
<div class="t" style="left:609.00px;width:14.00px;text-align:center;top:395.95px;font-size:9.2px;color:#666;">1</div>
<div class="t" style="left:130.20px;width:60px;text-align:right;top:428.55px;font-size:8.5px;color:#1a1a1a;font-weight:500;letter-spacing:-0.3px">摘要</div>
<div class="a" style="left:195.00px;top:422.60px;width:97.00px;height:18.90px;border-bottom:1px solid #dfe2e8;box-sizing:border-box"></div>
<div class="t" style="left:271.60px;width:60px;text-align:right;top:428.80px;font-size:8.5px;color:#1a1a1a;font-weight:500;letter-spacing:-0.3px">部门</div>
<div class="a" style="left:336.80px;top:422.60px;width:97.20px;height:19.40px;background:#f3f5f9;border-bottom:1px solid #dfe2e8;box-sizing:border-box"></div>
<div class="t" style="left:342.80px;top:428.70px;font-size:8.8px;color:#b9bdc4;">生产部</div>
<div class="t" style="left:430.60px;width:60px;text-align:right;top:428.80px;font-size:8.5px;color:#1a1a1a;font-weight:500;letter-spacing:-0.3px">领料人</div>
<div class="a" style="left:495.40px;top:422.60px;width:97.30px;height:19.40px;background:#f3f5f9;border-bottom:1px solid #dfe2e8;box-sizing:border-box"></div>
<div class="t" style="left:501.40px;top:428.70px;font-size:8.8px;color:#b9bdc4;">请选择</div>
<div class="t" style="left:580.60px;width:60px;text-align:right;top:428.55px;font-size:8.5px;color:#1a1a1a;font-weight:500;letter-spacing:-0.3px">审核人</div>
<div class="a" style="left:645.00px;top:422.60px;width:97.30px;height:18.90px;border-bottom:1px solid #dfe2e8;box-sizing:border-box"></div>
<div class="t" style="left:655.30px;top:428.45px;font-size:8.8px;color:#b9bdc4;">陈有财</div>
<div class="t" style="left:730.60px;width:60px;text-align:right;top:428.55px;font-size:8.5px;color:#1a1a1a;font-weight:500;letter-spacing:-0.3px">制单人</div>
<div class="a" style="left:795.30px;top:422.60px;width:96.70px;height:18.90px;border-bottom:1px solid #dfe2e8;box-sizing:border-box"></div>
<div class="t" style="left:805.60px;top:428.45px;font-size:8.8px;color:#b9bdc4;">陈有财</div>
<div class="t" style="left:130.20px;width:60px;text-align:right;top:450.80px;font-size:8.5px;color:#1a1a1a;font-weight:500;letter-spacing:-0.3px">分支机构</div>
<div class="a" style="left:195.00px;top:445.00px;width:97.00px;height:18.60px;background:#f3f5f9;border-bottom:1px solid #dfe2e8;box-sizing:border-box"></div>
<div class="t" style="left:201.00px;top:450.70px;font-size:8.8px;color:#b9bdc4;">总部</div>
<svg class="a" style="left:276.00px;top:451.70px" width="8" height="5" viewBox="0 0 8 5" fill="none" stroke="#b5b8bf" stroke-width="0.9"><path d="M0.6 0.6 L4 4.2 L7.4 0.6"/></svg>
<div class="t" style="left:271.60px;width:60px;text-align:right;top:451.40px;font-size:8.5px;color:#1a1a1a;font-weight:500;letter-spacing:-0.3px">项目</div>
<div class="a" style="left:336.80px;top:445.30px;width:97.20px;height:19.20px;background:#f3f5f9;border-bottom:1px solid #dfe2e8;box-sizing:border-box"></div>
<div class="t" style="left:342.80px;top:451.30px;font-size:8.8px;color:#b9bdc4;">请选择</div>
<div class="a" style="left:157px;top:516px;width:27px;height:21px;border:1px solid #cdcdcd;border-radius:2px;box-sizing:border-box"></div>
<div class="a" style="left:193.6px;top:516px;width:27px;height:21px;border:1px solid #cdcdcd;border-radius:2px;box-sizing:border-box"></div>
<svg class="a" style="left:167px;top:523px" width="7" height="7" viewBox="0 0 7 7"><path d="M6.2 0.3 V6.7 L0.6 3.5 Z" fill="#9a9a9a"/></svg>
<svg class="a" style="left:203.5px;top:523px" width="7" height="7" viewBox="0 0 7 7"><path d="M0.8 0.3 V6.7 L6.4 3.5 Z" fill="#9a9a9a"/></svg>
<div class="a" style="left:590.30px;top:516px;width:69.30px;height:21px;border:1px solid #979797;border-radius:3px;box-sizing:border-box;background:#fff"></div>
<svg class="a" style="left:603.5px;top:520.6px" width="10" height="10.5" viewBox="0 0 10 10.5" fill="none" stroke="#3a3a3a" stroke-width="1"><path d="M8 7.4 V0.7 H2.6 L0.6 3 V9.7 H6.2"/><path d="M6.8 8.1 L8 9.6 L9.2 8.1 Z" fill="#3a3a3a" stroke-width="0.6"/></svg>
<div class="t" style="left:616.30px;top:521.60px;font-size:9.6px;color:#333;">反审核</div>
<div class="a" style="left:715.30px;top:516px;width:69.30px;height:21px;border:1px solid #979797;border-radius:3px;box-sizing:border-box;background:#fff"></div>
<svg class="a" style="left:723.8px;top:520.6px" width="10" height="10.5" viewBox="0 0 10 10.5" fill="none" stroke="#3a3a3a" stroke-width="1"><path d="M8 7.4 V0.7 H2.6 L0.6 3 V9.7 H6.2"/><path d="M6.8 8.1 L8 9.6 L9.2 8.1 Z" fill="#3a3a3a" stroke-width="0.6"/></svg>
<div class="t" style="left:736.70px;top:521.60px;font-size:9.6px;color:#333;">保存新增</div>
<div class="a" style="left:801.50px;top:516px;width:69.30px;height:21px;border:1px solid #979797;border-radius:3px;box-sizing:border-box;background:#fff"></div>
<svg class="a" style="left:820px;top:521.6px" width="10.5" height="10.5" viewBox="0 0 10.5 10.5" fill="none" stroke="#444" stroke-width="0.9"><circle cx="5.25" cy="5.25" r="4.6"/><path d="M3 5.3 L4.7 7 L7.6 3.9"/></svg>
<div class="t" style="left:833.00px;top:521.60px;font-size:9.6px;color:#333;">保存</div>
<div class="a" style="left:888.30px;top:516px;width:69.30px;height:21px;border:1px solid #979797;border-radius:3px;box-sizing:border-box;background:#fff"></div>
<svg class="a" style="left:906.3px;top:521.6px" width="10.5" height="10.5" viewBox="0 0 10.5 10.5" fill="none" stroke="#444" stroke-width="0.9"><circle cx="5.25" cy="5.25" r="4.6"/><path d="M3.2 5.25 H7.3"/></svg>
<div class="t" style="left:919.60px;top:521.60px;font-size:9.6px;color:#333;">取消</div>
</body></html>
